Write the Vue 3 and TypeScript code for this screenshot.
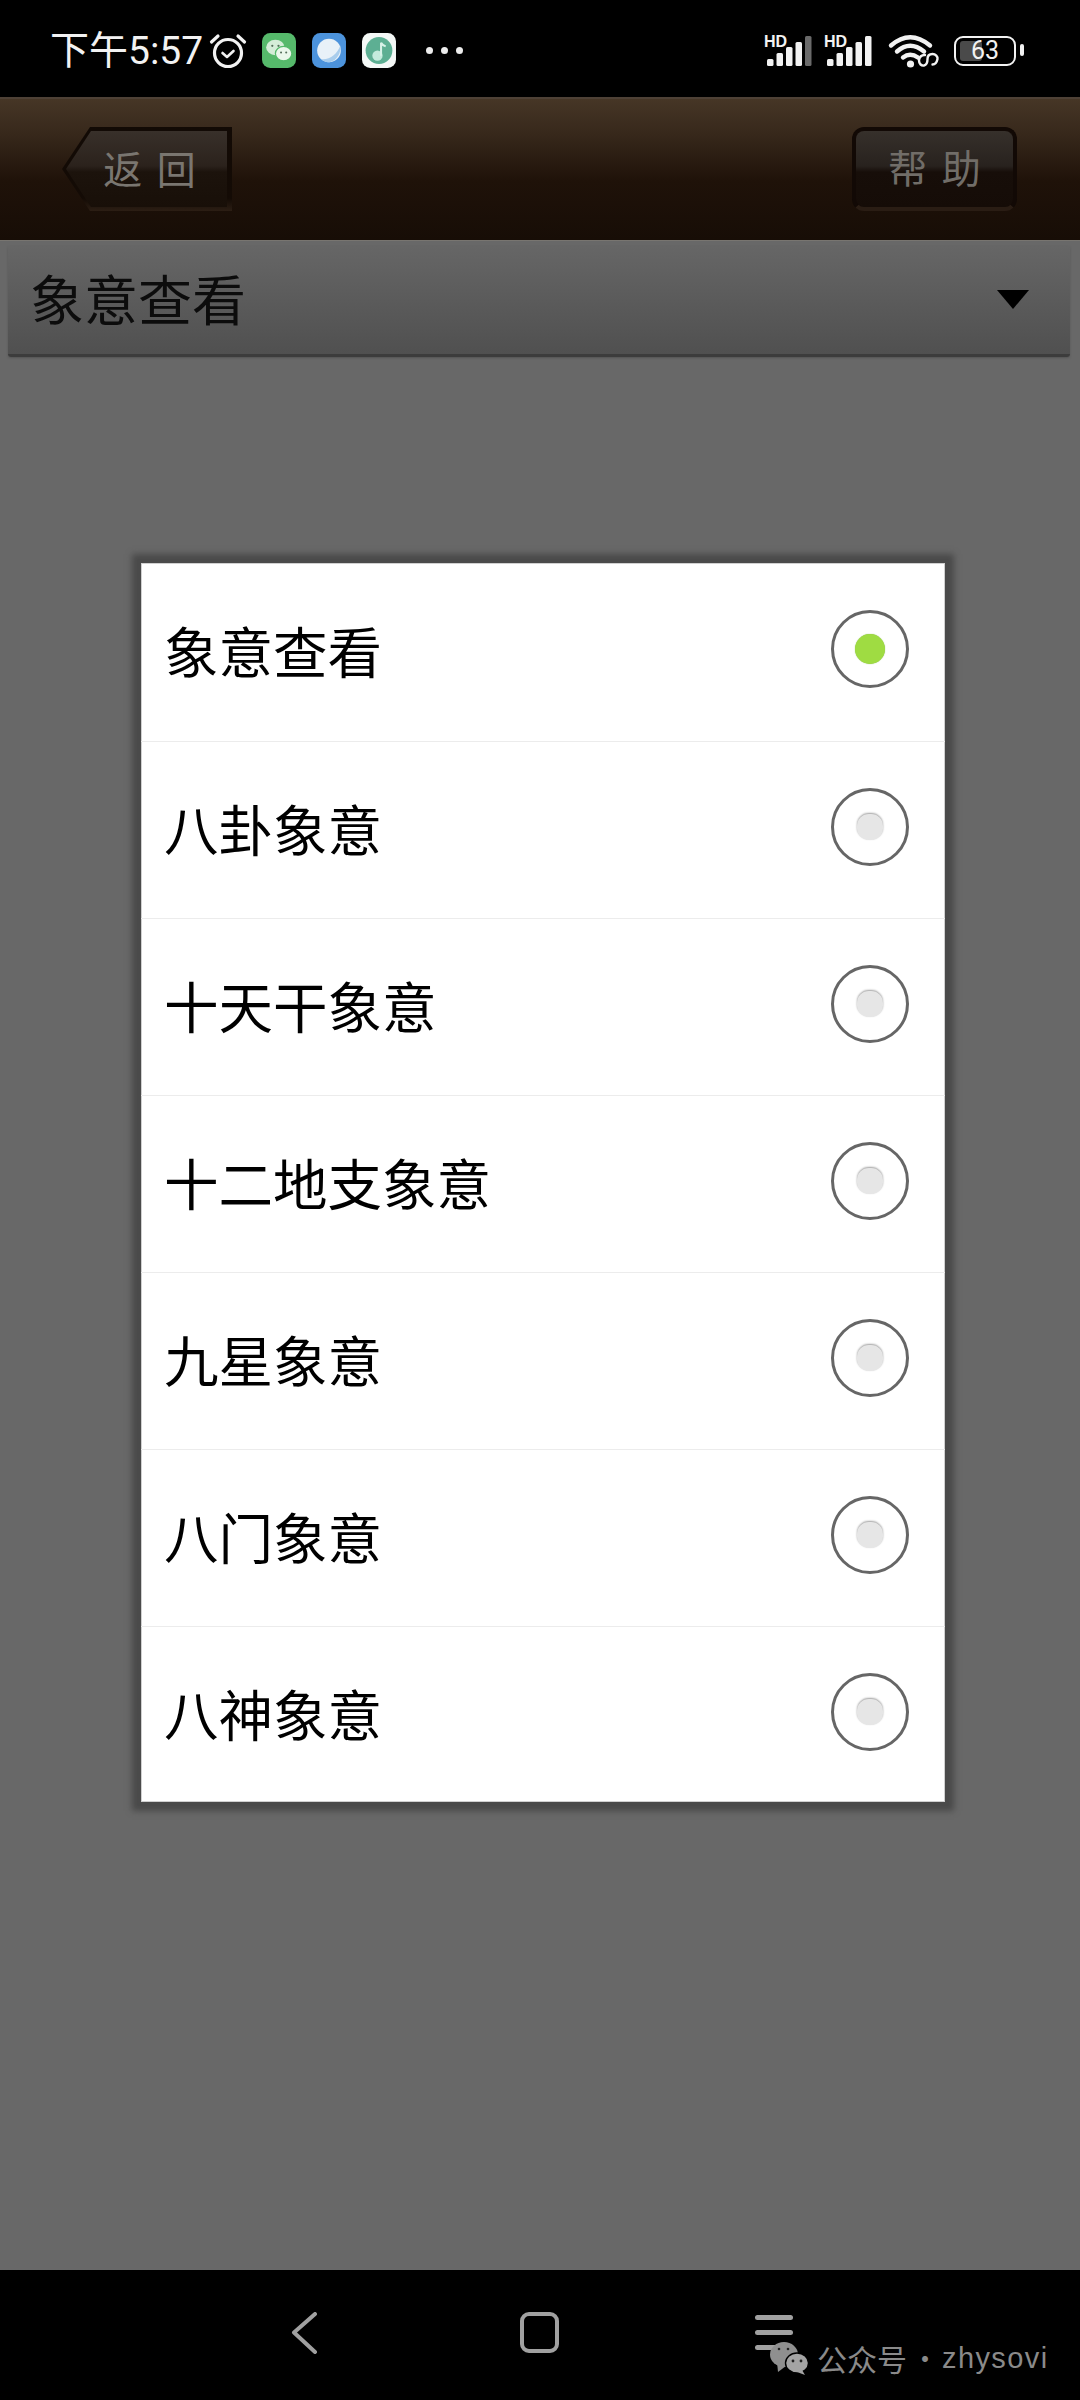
<template>
  <div class="page">
    <div class="status-bar">
      <span class="time">下午5:57</span>
      <svg class="alarm" width="38" height="36" viewBox="0 0 38 36" fill="none" stroke="#f2f2f2">
        <circle cx="19" cy="20" r="13.500" stroke-width="3.2" />
        <path d="M13.500 20l4.500 4 6.500-6" stroke-width="2.6" stroke-linecap="round" stroke-linejoin="round" />
        <path d="M2.500 9L9 3M35.500 9L29 3" stroke-width="3.2" stroke-linecap="round" />
      </svg>
      <svg class="app-icon" width="34" height="35" viewBox="0 0 33 34">
        <rect width="33" height="34" rx="8" fill="#56b96b" />
        <ellipse cx="13" cy="14" rx="9" ry="7.5" fill="#d5edd8" />
        <ellipse cx="21" cy="20" rx="8" ry="7" fill="#eaf7eb" stroke="#56b96b" stroke-width="1.2" />
        <circle cx="10" cy="12.5" r="1.1" fill="#56705c" />
        <circle cx="16" cy="12.5" r="1.1" fill="#56705c" />
        <circle cx="18.5" cy="19" r="1" fill="#56705c" />
        <circle cx="23.5" cy="19" r="1" fill="#56705c" />
      </svg>
      <svg class="app-icon" width="34" height="35" viewBox="0 0 33 34">
        <rect width="33" height="34" rx="8" fill="#4c93dc" />
        <circle cx="16.5" cy="17" r="11.500" fill="#e8f1f8" />
        <path d="M9 25.500c8 1 16-5 18.500-13.500 1 7-3 15-10.500 16.500-3 0-6-1-8-3z" fill="#a9cdec" />
      </svg>
      <svg class="app-icon" width="34" height="35" viewBox="0 0 33 34">
        <rect width="33" height="34" rx="8" fill="#f4f8f6" />
        <circle cx="16.5" cy="17" r="13" fill="#5daf93" />
        <circle cx="15" cy="22" r="5" fill="#c4ebdd" />
        <path d="M18.500 22V9.500c1 2 3 3 4.500 3.500" fill="none" stroke="#d8f2e8" stroke-width="2" />
      </svg>
      <div class="dots"><i></i><i></i><i></i></div>

      <div class="status-right">
        <div v-for="(sig, i) in signals" :key="i" class="signal">
          <span class="hd">HD</span>
          <svg width="50" height="30" viewBox="0 0 50 30">
            <rect
              v-for="(b, j) in sig"
              :key="j"
              :x="3 + j * 9.500"
              :y="b.y"
              width="6.500"
              :height="30 - b.y"
              rx="1.500"
              :fill="b.color"
            />
          </svg>
        </div>
        <svg class="wifi" width="51" height="34" viewBox="0 0 51 34" fill="none" stroke="#f2f2f2" stroke-linecap="round">
          <path d="M3 11.500Q22 -5 42 11.500" stroke-width="4.400" />
          <path d="M9 17.500Q22 6 36 17.500" stroke-width="4.400" />
          <path d="M15 23.500Q22 18 30 23.500" stroke-width="4.400" />
          <circle cx="22.500" cy="30" r="3.600" fill="#f2f2f2" stroke="none" />
          <path d="M37 21c-3-.5-6 2-6 5.500s2.500 5.500 5 5 3.500-3.500 3.500-6.500 2-5 5-5 5.500 2.500 5 5-2 5.500-5 5.500" stroke-width="2.400" />
        </svg>
        <div class="battery">
          <div class="battery-level"></div>
          <span class="battery-text">63</span>
        </div>
      </div>
    </div>

    <div class="header">
      <div class="back-outer">
        <div class="back-btn"><span>返 回</span></div>
      </div>
      <div class="help-btn"><span>帮 助</span></div>
    </div>

    <div class="content">
      <div class="dropdown">
        <span class="dropdown-text">象意查看</span>
        <div class="dropdown-arrow"></div>
      </div>

      <div class="dialog">
        <div v-for="(item, i) in items" :key="item" class="row">
          <span class="row-text">{{ item }}</span>
          <div class="radio">
            <div class="radio-dot" :class="{ on: i === 0 }"></div>
          </div>
        </div>
      </div>
    </div>

    <div class="nav-bar">
      <svg width="27" height="42" viewBox="0 0 27 42" fill="none" stroke="#a0a0a0" stroke-width="4" stroke-linecap="round" stroke-linejoin="round">
        <path d="M24 2L3 20.500 24 40" />
      </svg>
      <div class="nav-home"></div>
      <div class="nav-menu"><i></i><i></i><i></i></div>

      <div class="watermark">
        <svg width="40" height="33" viewBox="0 0 40 33">
          <ellipse cx="15" cy="12.500" rx="14" ry="12.500" fill="#8f8f8f" />
          <path d="M8 20l1 10 8-6z" fill="#8f8f8f" />
          <ellipse cx="28" cy="21" rx="11.500" ry="10" fill="#a4a4a4" stroke="#000" stroke-width="1.400" />
          <path d="M33 28l3 5-8-3z" fill="#a4a4a4" />
          <circle cx="24" cy="19" r="1.400" fill="#222" />
          <circle cx="32" cy="19" r="1.400" fill="#222" />
          <circle cx="10" cy="7" r="1.300" fill="#222" />
          <circle cx="19" cy="7" r="1.300" fill="#222" />
        </svg>
        <span class="wm-cn">公众号</span>
        <span class="wm-dot">·</span>
        <span class="wm-en">zhysovi</span>
      </div>
    </div>
  </div>
</template>

<script setup lang="ts">
interface Bar {
  y: number;
  color: string;
}

const items: string[] = [
  "象意查看",
  "八卦象意",
  "十天干象意",
  "十二地支象意",
  "九星象意",
  "八门象意",
  "八神象意",
];

const makeBars = (lastColor: string): Bar[] => [
  { y: 23, color: "#f2f2f2" },
  { y: 17, color: "#f2f2f2" },
  { y: 11, color: "#f2f2f2" },
  { y: 6, color: "#f2f2f2" },
  { y: 0, color: lastColor },
];

const signals: Bar[][] = [makeBars("#6a6a6a"), makeBars("#f2f2f2")];
</script>

<style>
html,
body {
  margin: 0;
  background: #000;
}
</style>

<style scoped>
.page {
  width: 1080px;
  height: 2400px;
  display: flex;
  flex-direction: column;
  font-family: "Noto Sans CJK SC", "Liberation Sans", sans-serif;
  overflow: hidden;
}

.status-bar {
  height: 97px;
  flex-shrink: 0;
  background: #000;
  display: flex;
  align-items: center;
  padding: 4px 64px 0 50px;
  box-sizing: border-box;
  color: #f2f2f2;
}

.time {
  font-family: "Roboto", "Noto Sans CJK SC", sans-serif;
  font-size: 39px;
  line-height: 44px;
  width: 159px;
  flex-shrink: 0;
  white-space: nowrap;
}

.alarm {
  margin-right: 15px;
}

.app-icon {
  margin-right: 16px;
}

.dots {
  display: flex;
  gap: 8px;
  margin-left: 14px;
}

.dots i {
  width: 7px;
  height: 7px;
  border-radius: 50%;
  background: #ececec;
}

.status-right {
  margin-left: auto;
  display: flex;
  align-items: center;
}

.signal {
  position: relative;
  width: 50px;
  height: 30px;
  margin-right: 10px;
  margin-top: 1px;
}

.signal svg {
  display: block;
}

.hd {
  position: absolute;
  left: 0;
  top: -2px;
  font-family: "Liberation Sans", sans-serif;
  font-size: 16px;
  line-height: 16px;
  font-weight: 700;
  color: #f2f2f2;
}

.wifi {
  margin-left: 4px;
  margin-right: 15px;
  overflow: visible;
}

.battery {
  position: relative;
  width: 62px;
  height: 30px;
  box-sizing: border-box;
  border: 2.500px solid #f2f2f2;
  border-radius: 9px;
  display: flex;
  align-items: center;
  justify-content: center;
}

.battery::after {
  content: "";
  position: absolute;
  right: -10px;
  top: 6px;
  width: 4px;
  height: 12px;
  border-radius: 2px;
  background: #f2f2f2;
}

.battery-level {
  position: absolute;
  left: 4px;
  top: 3px;
  bottom: 3px;
  width: 22px;
  border-radius: 3px;
  background: #4a4a4a;
}

.battery-text {
  position: relative;
  font-family: "Roboto", sans-serif;
  font-size: 25px;
  line-height: 25px;
  color: #f2f2f2;
}

.header {
  height: 143px;
  flex-shrink: 0;
  box-sizing: border-box;
  border-top: 2px solid #4e4136;
  background: linear-gradient(180deg, #463626 0%, #37281b 25%, #1f1209 58%, #170d06 100%);
  display: flex;
  justify-content: space-between;
  align-items: flex-start;
  padding: 28px 63px 0 62px;
}

.back-outer {
  width: 170px;
  height: 84px;
  background: linear-gradient(180deg, #120a05 0%, #140b05 85%, #2c1e14 100%);
  clip-path: polygon(0 50%, 28px 0, 100% 0, 100% 100%, 28px 100%);
  display: flex;
  align-items: flex-start;
  justify-content: flex-end;
  padding: 4px 5px 0 0;
  box-sizing: border-box;
}

.back-btn {
  width: 161px;
  height: 76px;
  clip-path: polygon(0 50%, 25px 0, 100% 0, 100% 100%, 25px 100%);
  background: linear-gradient(180deg, #38302a 0%, #2b221c 46%, #1c130c 54%, #180f08 100%);
  color: #7a7670;
  font-size: 39px;
  word-spacing: 6px;
  line-height: 72px;
  text-align: center;
  text-indent: 6px;
}

.help-btn {
  width: 165px;
  height: 84px;
  box-sizing: border-box;
  border: 4px solid #120905;
  border-bottom-color: #2a1d14;
  border-radius: 12px;
  background: linear-gradient(180deg, #36302b 0%, #28221e 46%, #170e09 54%, #150c07 100%);
  color: #716d68;
  font-size: 39px;
  word-spacing: 6px;
  line-height: 70px;
  text-align: center;
}

.content {
  flex: 1;
  background: #686868;
  display: flex;
  flex-direction: column;
  border-top: 1px solid #787570;
}

.dropdown {
  height: 111px;
  margin: 5px 10px 0 8px;
  box-sizing: border-box;
  background: linear-gradient(180deg, #666666 0%, #505050 100%);
  border-bottom: 3px solid #3c3c3c;
  border-radius: 3px;
  box-shadow: 0 1px 2px #555;
  display: flex;
  align-items: center;
  justify-content: space-between;
  padding: 0 41px 4px 22px;
}

.dropdown-text {
  font-size: 54px;
  line-height: 70px;
  color: #0c0c0c;
}

.dropdown-arrow {
  width: 0;
  height: 0;
  border-left: 16px solid transparent;
  border-right: 16px solid transparent;
  border-top: 19px solid #000;
  margin-top: 3px;
}

.dialog {
  width: 804px;
  margin: 206px 0 0 141px;
  background: #fff;
  box-shadow: inset 0 0 0 1px #d0d0d0, 0 0 6px 9px #4a4a4a;
}

.row {
  height: 177px;
  box-sizing: border-box;
  border-top: 1px solid #ececec;
  display: flex;
  align-items: center;
  justify-content: space-between;
  padding: 0 36px 4px 23px;
}

.row:first-child {
  border-top: none;
  height: 178px;
}

.row:last-child {
  height: 176px;
}

.row-text {
  font-size: 54.500px;
  line-height: 70px;
  color: #000;
}

.radio {
  width: 78px;
  height: 78px;
  box-sizing: border-box;
  border: 3.500px solid #666666;
  border-radius: 50%;
  display: flex;
  align-items: center;
  justify-content: center;
  margin-top: -2px;
}

.radio-dot {
  width: 26px;
  height: 26px;
  border-radius: 45%;
  background: #e6e6e6;
  box-shadow: 0 -1px 2px #a0a0a0;
}

.radio-dot.on {
  width: 30px;
  height: 30px;
  border-radius: 50%;
  background: #9fdc42;
  box-shadow: 0 0 1px #7eb040;
}

.nav-bar {
  position: relative;
  height: 130px;
  flex-shrink: 0;
  background: #000;
  display: flex;
  align-items: flex-start;
  padding: 42px 0 0 291px;
  box-sizing: border-box;
}

.nav-home {
  width: 39px;
  height: 41px;
  box-sizing: border-box;
  border: 4.500px solid #a0a0a0;
  border-radius: 9px;
  margin-left: 202px;
}

.nav-menu {
  margin-left: 196px;
  margin-top: 3px;
  display: flex;
  flex-direction: column;
  gap: 10px;
}

.nav-menu i {
  display: block;
  width: 38px;
  height: 5px;
  border-radius: 3px;
  background: #a0a0a0;
}

.watermark {
  position: absolute;
  left: 769px;
  top: 71px;
  display: flex;
  align-items: center;
  color: #8a8a8a;
}

.wm-cn {
  font-size: 30px;
  line-height: 34px;
  margin-left: 8px;
}

.wm-dot {
  font-size: 28px;
  line-height: 34px;
  margin: 0 3px 0 4px;
}

.wm-en {
  font-family: "Liberation Sans", sans-serif;
  font-size: 29px;
  line-height: 34px;
  letter-spacing: 1.400px;
}
</style>
